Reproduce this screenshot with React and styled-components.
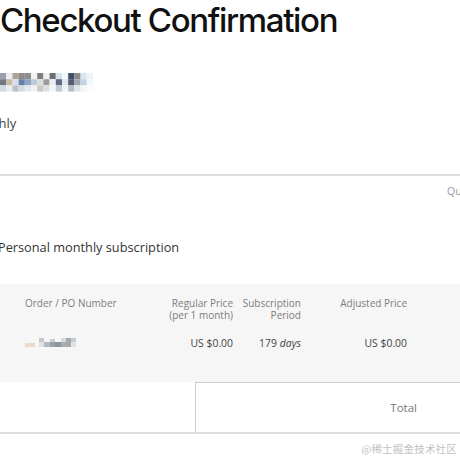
import React from "react";
import styled, { createGlobalStyle } from "styled-components";

const Global = createGlobalStyle`
  html, body { margin: 0; padding: 0; background: #fff; }
  body { font-family: "Open Sans", "Noto Sans", sans-serif; color: #333; }
`;

const Page = styled.div`
  position: relative;
  width: 460px;
  height: 460px;
  overflow: hidden;
  background: #fff;
`;

const Title = styled.h1`
  margin: 0;
  font-family: Inter, "Liberation Sans", sans-serif;
  font-weight: 500;
  font-size: 33px;
  line-height: 40px;
  letter-spacing: -1.35px;
  color: #111;
  white-space: nowrap;
`;

const Blur = styled.svg`
  display: block;
  margin-top: ${(p) => p.$top}px;
  margin-left: ${(p) => p.$left || 0}px;
`;

const Plan = styled.div`
  margin-top: 22px;
  margin-left: -33.5px;
  font-size: 13px;
  line-height: 18px;
  color: #444;
  white-space: nowrap;
`;

const Divider = styled.div`
  margin-top: 42px;
  height: 2px;
  background: #dedede;
`;

const QtyRow = styled.div`
  display: flex;
  justify-content: flex-end;
  padding-top: 8px;
  margin-right: -40px;
`;

const QtyHead = styled.span`
  font-size: 10.5px;
  line-height: 14px;
  color: #999;
  width: 53px;
`;

const Product = styled.div`
  margin-top: 40px;
  margin-left: -2px;
  font-size: 12.75px;
  line-height: 18px;
  color: #333;
  white-space: nowrap;
`;

const Panel = styled.div`
  margin-top: 28px;
  background: #f6f6f6;
  padding: 13px 0 32px 25px;
`;

const Grid = styled.div`
  display: grid;
  grid-template-columns: 140px 68px 68px 106px;
  row-gap: 15.5px;
  line-height: 12.5px;
  white-space: nowrap;
`;

const Head = styled.div`
  font-size: 10px;
  color: #7d7d7d;
  text-align: ${(p) => (p.$left ? "left" : "right")};
`;

const Cell = styled.div`
  font-size: 10.4px;
  color: #444;
  display: flex;
  align-items: center;
  justify-content: ${(p) => (p.$left ? "flex-start" : "flex-end")};
  em { font-style: italic; margin-left: 3px; }
`;

const Totals = styled.div`
  display: grid;
  grid-template-columns: 195px 1fr;
  height: 50px;
  border-bottom: 2px solid #dcdcdc;
`;

const TotalBox = styled.div`
  border-left: 1px solid #cfcfcf;
  border-top: 1px solid #cfcfcf;
  display: flex;
  align-items: center;
  justify-content: flex-end;
  padding-right: 43px;
  font-size: 11.5px;
  color: #777;
`;

const Watermark = styled.div`
  position: absolute;
  right: 3px;
  bottom: 4px;
  font-family: "Noto Sans CJK SC", sans-serif;
  font-size: 10.5px;
  color: #c2c2c2;
  letter-spacing: 0.2px;
`;

const nameCells = [
  ["#9aa0ad", "#e9ecf1", "#aea393", "#8d8d8d", "#8f8f8f", "#f2f2f2", "#7d7d7d", "#eef1f4", "#707070", "#d3e2f0", "#f4f6f8", "#3f5068", "#8a8a8a", "#d9e7f4", "#eef3f9"],
  ["#727784", "#c9b8a2", "#dadde3", "#6480ac", "#8ea6c4", "#bccbdc", "#dcdcdc", "#9c9c9c", "#e8edf2", "#616d80", "#dde8f3", "#535d6d", "#a0a6b0", "#c5d4e4", "#f2f6fa"],
  ["#d0dbe8", "#ececec", "#b7bfcb", "#d4dae2", "#e3e8ee", "#f0f2f5", "#c9c9c9", "#dedede", "#f3f5f8", "#c0c9d6", "#eef3f8", "#b5bcc7", "#e2e5ea", "#f3f6f9", "#fafcfd"],
];

function Mosaic({ cells, size, top, left }) {
  const w = cells[0].length * size;
  const h = cells.length * size;
  return (
    <Blur $top={top} $left={left} width={w} height={h} viewBox={`0 0 ${w} ${h}`}>
      {cells.map((row, r) =>
        row.map((c, i) => (
          <rect key={`${r}-${i}`} x={i * size} y={r * size} width={size} height={size} fill={c} />
        ))
      )}
    </Blur>
  );
}

function OrderBlur() {
  return (
    <svg width="58" height="10" viewBox="0 0 58 10">
      <rect x="0" y="5" width="10" height="4" fill="#ead9c4" />
      <rect x="14" y="0" width="5" height="4" fill="#c3c7cf" />
      <rect x="14" y="4" width="5" height="5" fill="#e2e2e4" />
      <rect x="19" y="4" width="6" height="5" fill="#b4b8be" />
      <rect x="25" y="1" width="5" height="4" fill="#c8ccd3" />
      <rect x="25" y="4" width="5" height="5" fill="#9aa0a8" />
      <rect x="30" y="4" width="6" height="5" fill="#8f949c" />
      <rect x="36" y="0" width="5" height="4" fill="#d8d8d8" />
      <rect x="36" y="4" width="5" height="5" fill="#a9aeb6" />
      <rect x="41" y="0" width="5" height="9" fill="#a3a8b0" />
      <rect x="46" y="0" width="5" height="4" fill="#c4c9d2" />
      <rect x="46" y="4" width="5" height="5" fill="#e3e3e3" />
    </svg>
  );
}

export default function App() {
  return (
    <Page>
      <Global />
      <Title>Checkout Confirmation</Title>
      <Mosaic cells={nameCells} size={6.2} top={33} left={0} />
      <Plan>Monthly</Plan>
      <Divider />
      <QtyRow>
        <QtyHead>Quantity</QtyHead>
      </QtyRow>
      <Product>Personal monthly subscription</Product>
      <Panel>
        <Grid>
          <Head $left>Order / PO Number</Head>
          <Head>
            Regular Price
            <br />
            (per 1 month)
          </Head>
          <Head>
            Subscription
            <br />
            Period
          </Head>
          <Head>Adjusted Price</Head>
          <Cell $left>
            <OrderBlur />
          </Cell>
          <Cell>US $0.00</Cell>
          <Cell>
            179<em>days</em>
          </Cell>
          <Cell>US $0.00</Cell>
        </Grid>
      </Panel>
      <Totals>
        <div />
        <TotalBox>Total</TotalBox>
      </Totals>
      <Watermark>@稀土掘金技术社区</Watermark>
    </Page>
  );
}
